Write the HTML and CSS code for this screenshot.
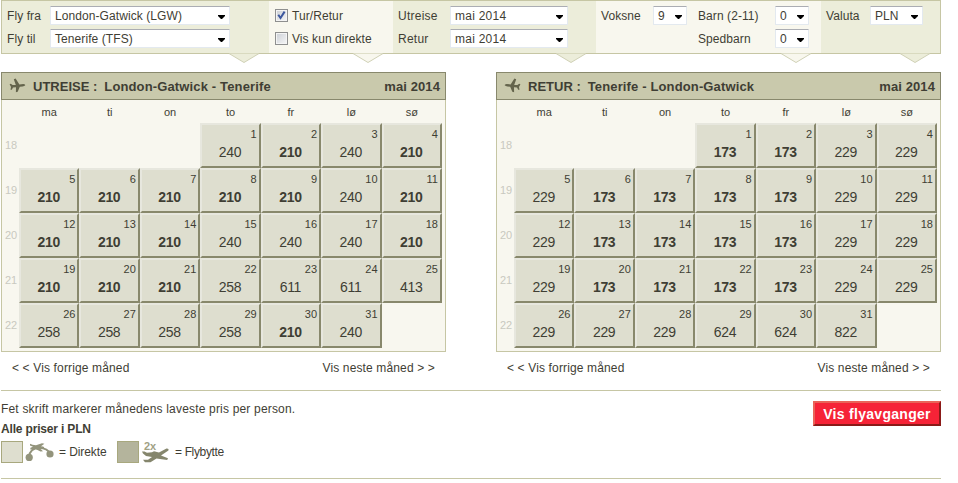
FILE: index.html
```html
<!DOCTYPE html>
<html lang="no">
<head>
<meta charset="utf-8">
<title>Lavpriskalender</title>
<link rel="stylesheet" href="styles.css">
</head>
<body>
<svg class="defs" width="0" height="0">
  <symbol id="plane" viewBox="0 0 17 15">
    <path d="M.6 6.2 1.8 5.8 3.6 6.9H6.8L4.8 1.2 6.6.6 10.4 6.4 14.4 5.9Q16.6 6.3 16.3 7.3 15.4 8.2 13.6 8.4L10.8 8.8 8.7 13.8 6.9 14.2 7 9.3 4 9.5 2.8 11.7 1.5 11.8 2 8.9Z"/>
  </symbol>
  <symbol id="arrow" viewBox="0 0 7 4"><path d="M0 0H7V1L4 4H3L0 1Z"/></symbol>
</svg>
<div class="page">
  <form class="filters">
    <div class="group route">
      <label>Fly fra</label><span class="select"><span>London-Gatwick (LGW)</span><svg><use href="#arrow"/></svg></span>
      <label>Fly til</label><span class="select"><span>Tenerife (TFS)</span><svg><use href="#arrow"/></svg></span>
      <svg class="notch" viewBox="0 0 30 10"><path d="M0 0 15 9 30 0"/></svg>
    </div>
    <div class="group light options">
      <span class="check"><svg viewBox="0 0 11 11"><path d="M2.3 4.8 4.5 8 8.6 1.6"/></svg></span><label>Tur/Retur</label>
      <span class="check"></span><label>Vis kun direkte</label>
      <svg class="notch" viewBox="0 0 30 10"><path d="M0 0 15 9 30 0"/></svg>
    </div>
    <div class="group dates">
      <label>Utreise</label><span class="select"><span>mai 2014</span><svg><use href="#arrow"/></svg></span>
      <label>Retur</label><span class="select"><span>mai 2014</span><svg><use href="#arrow"/></svg></span>
      <svg class="notch" viewBox="0 0 30 10"><path d="M0 0 15 9 30 0"/></svg>
    </div>
    <div class="group light people">
      <label>Voksne</label><span class="select"><span>9</span><svg><use href="#arrow"/></svg></span>
      <label>Barn (2-11)</label><span class="select"><span>0</span><svg><use href="#arrow"/></svg></span>
      <label class="infant">Spedbarn</label><span class="select"><span>0</span><svg><use href="#arrow"/></svg></span>
      <svg class="notch" viewBox="0 0 30 10"><path d="M0 0 15 9 30 0"/></svg>
    </div>
    <div class="group currency">
      <label>Valuta</label><span class="select"><span>PLN</span><svg><use href="#arrow"/></svg></span>
      <svg class="notch" viewBox="0 0 30 10"><path d="M0 0 15 9 30 0"/></svg>
    </div>
  </form>

  <div class="calendars">
    <section class="trip">
      <div class="calendar">
        <header><svg class="plane"><use href="#plane"/></svg><b class="kind">UTREISE :</b><b class="places">London-Gatwick - Tenerife</b><b class="month">mai 2014</b></header>
        <div class="grid names"><span></span><span>ma</span><span>ti</span><span>on</span><span>to</span><span>fr</span><span>lø</span><span>sø</span></div>
        <div class="grid"><span class="week">18</span><span></span><span></span><span></span><a class="day"><i>1</i><span>240</span></a><a class="day low"><i>2</i><span>210</span></a><a class="day"><i>3</i><span>240</span></a><a class="day low"><i>4</i><span>210</span></a></div>
        <div class="grid"><span class="week">19</span><a class="day low"><i>5</i><span>210</span></a><a class="day low"><i>6</i><span>210</span></a><a class="day low"><i>7</i><span>210</span></a><a class="day low"><i>8</i><span>210</span></a><a class="day low"><i>9</i><span>210</span></a><a class="day"><i>10</i><span>240</span></a><a class="day low"><i>11</i><span>210</span></a></div>
        <div class="grid"><span class="week">20</span><a class="day low"><i>12</i><span>210</span></a><a class="day low"><i>13</i><span>210</span></a><a class="day low"><i>14</i><span>210</span></a><a class="day"><i>15</i><span>240</span></a><a class="day"><i>16</i><span>240</span></a><a class="day"><i>17</i><span>240</span></a><a class="day low"><i>18</i><span>210</span></a></div>
        <div class="grid"><span class="week">21</span><a class="day low"><i>19</i><span>210</span></a><a class="day low"><i>20</i><span>210</span></a><a class="day low"><i>21</i><span>210</span></a><a class="day"><i>22</i><span>258</span></a><a class="day"><i>23</i><span>611</span></a><a class="day"><i>24</i><span>611</span></a><a class="day"><i>25</i><span>413</span></a></div>
        <div class="grid"><span class="week">22</span><a class="day"><i>26</i><span>258</span></a><a class="day"><i>27</i><span>258</span></a><a class="day"><i>28</i><span>258</span></a><a class="day"><i>29</i><span>258</span></a><a class="day low"><i>30</i><span>210</span></a><a class="day"><i>31</i><span>240</span></a><span></span></div>
      </div>
      <nav><a>&lt; &lt; Vis forrige måned</a><a>Vis neste måned &gt; &gt;</a></nav>
    </section>
    <section class="trip">
      <div class="calendar">
        <header><svg class="plane back"><use href="#plane"/></svg><b class="kind">RETUR :</b><b class="places">Tenerife - London-Gatwick</b><b class="month">mai 2014</b></header>
        <div class="grid names"><span></span><span>ma</span><span>ti</span><span>on</span><span>to</span><span>fr</span><span>lø</span><span>sø</span></div>
        <div class="grid"><span class="week">18</span><span></span><span></span><span></span><a class="day low"><i>1</i><span>173</span></a><a class="day low"><i>2</i><span>173</span></a><a class="day"><i>3</i><span>229</span></a><a class="day"><i>4</i><span>229</span></a></div>
        <div class="grid"><span class="week">19</span><a class="day"><i>5</i><span>229</span></a><a class="day low"><i>6</i><span>173</span></a><a class="day low"><i>7</i><span>173</span></a><a class="day low"><i>8</i><span>173</span></a><a class="day low"><i>9</i><span>173</span></a><a class="day"><i>10</i><span>229</span></a><a class="day"><i>11</i><span>229</span></a></div>
        <div class="grid"><span class="week">20</span><a class="day"><i>12</i><span>229</span></a><a class="day low"><i>13</i><span>173</span></a><a class="day low"><i>14</i><span>173</span></a><a class="day low"><i>15</i><span>173</span></a><a class="day low"><i>16</i><span>173</span></a><a class="day"><i>17</i><span>229</span></a><a class="day"><i>18</i><span>229</span></a></div>
        <div class="grid"><span class="week">21</span><a class="day"><i>19</i><span>229</span></a><a class="day low"><i>20</i><span>173</span></a><a class="day low"><i>21</i><span>173</span></a><a class="day low"><i>22</i><span>173</span></a><a class="day low"><i>23</i><span>173</span></a><a class="day"><i>24</i><span>229</span></a><a class="day"><i>25</i><span>229</span></a></div>
        <div class="grid"><span class="week">22</span><a class="day"><i>26</i><span>229</span></a><a class="day"><i>27</i><span>229</span></a><a class="day"><i>28</i><span>229</span></a><a class="day"><i>29</i><span>624</span></a><a class="day"><i>30</i><span>624</span></a><a class="day"><i>31</i><span>822</span></a><span></span></div>
      </div>
      <nav><a>&lt; &lt; Vis forrige måned</a><a>Vis neste måned &gt; &gt;</a></nav>
    </section>
  </div>

  <footer>
    <div class="notes">
      <p class="note">Fet skrift markerer månedens laveste pris per person.</p>
      <p class="prices">Alle priser i PLN</p>
      <div class="legend">
        <span class="swatch"></span>
        <svg class="direct" viewBox="0 0 30 20">
          <path class="arc" d="M4 15Q5 6 14 6Q23 6 25 12"/>
          <circle cx="4.2" cy="15.4" r="3.6"/><circle cx="25" cy="12" r="3.6"/>
          <path d="M5 1.8 7.5 2.8 11 3.2 17 1.2 19.4 1.8 16 4.2 18 4.4Q20.4 5.4 18 6.6L15 6.6 18 9.2 15.5 9.4 10 6.8 5.2 7.4 5.5 5.8 8 4.8 5 3.5Z"/>
        </svg>
        <span class="direct-text">= Direkte</span>
        <span class="swatch dark"></span>
        <svg class="change" viewBox="0 0 28 22">
          <text x="2" y="8.5">2x</text>
          <path d="M0 10.5 2.5 10.4 5 11.8 10 11.2 12 10.2 17 11.6 24.5 7.4Q27.2 7.2 26.4 9.6L19 14.4 26 17.2 25.2 19 14.5 17.6 8.5 21.2H3L1 18.8H6L10 16 4 15 1 12.6Z"/>
        </svg>
        <span class="change-text">= Flybytte</span>
      </div>
    </div>
    <button type="button">Vis flyavganger</button>
  </footer>
</div>
</body>
</html>
```
FILE: styles.css
```css
* { box-sizing: border-box; }
body { margin: 0; background: #fff; color: #3f3e34; font: 12px/15px "Liberation Sans", Arial, sans-serif; }
p { margin: 0; }
.defs { position: absolute; }
.page { width: 940px; margin-left: 1px; }

.filters { display: flex; height: 54px; border: 1px solid #c6c6a4; background: #ecedda; letter-spacing: .08px; }
.group { position: relative; display: grid; grid-auto-rows: 19px; row-gap: 4px; align-items: center; align-content: start; padding-top: 5px; white-space: nowrap; background: #ecedda; --fill: #ecedda; }
.group label { padding-top: 2px; }
.light { background: #f8f7ee; --fill: #f8f7ee; }
.route { width: 267px; grid-template-columns: 43px 180px; padding-left: 5px; }
.options { width: 124px; grid-template-columns: 17px auto; padding-left: 6px; }
.dates { width: 203px; grid-template-columns: 52px 118px; padding-left: 5px; letter-spacing: .25px; }
.people { width: 225px; grid-template-columns: 52px 34px 11px 77px 34px; padding-left: 5px; }
.people label:nth-of-type(2), .infant { grid-column: 4; }
.currency { width: 119px; grid-template-columns: 44px 53px; padding-left: 5px; }
.notch { position: absolute; right: 10px; top: 51px; width: 30px; height: 11px; fill: var(--fill); stroke: #d0d1b6; overflow: visible; }
.notch path { transform: translateY(1px); }
.select { height: 19px; display: flex; align-items: center; justify-content: space-between; padding: 0 4px 0 4px; background: #fff; border: 1px solid #e3e9ef; border-top-color: #abadb3; border-radius: 1px; line-height: 17px; }
.select span { padding-top: 2px; }
.select svg { width: 7px; height: 4px; margin-top: 3px; fill: #000; }
.check { width: 13px; height: 13px; border: 1px solid #8e8f8f; background: linear-gradient(135deg, #cbcfd5, #f6f6f6); box-shadow: inset 0 0 0 1px #f4f4f4; }
.check svg { display: block; width: 11px; height: 11px; fill: none; stroke: #3c579e; stroke-width: 2; }

.calendars { display: flex; gap: 50px; margin-top: 18px; }
.trip { width: 445px; }
.calendar { height: 280px; border: 1px solid #c6c6a4; border-top: 0; background: #f8f7ef; }
header { display: flex; align-items: center; height: 28px; margin: 0 -1px; padding: 0 5px 0 7px; border: 1px solid #88886c; background: #c9c9ac; font-size: 13px; white-space: nowrap; }
.plane { width: 17px; height: 15px; margin-right: 7px; margin-top: -2px; fill: #64644c; }
.back { transform: scaleX(-1); }
.kind { margin-right: 7px; }
.places { letter-spacing: .14px; }
.month { margin-left: auto; letter-spacing: .1px; }
.grid { display: grid; grid-template-columns: 17px repeat(7, 60.43px); grid-auto-rows: 45px; }
.names { grid-auto-rows: 23px; line-height: 25px; font-size: 11px; text-align: center; }
.week { align-self: center; padding-left: 1px; text-align: center; color: #c9c9bf; font-size: 11px; }
.day { display: flex; flex-direction: column; border: 2px solid #e7e7de; border-right-color: #88886c; border-bottom-color: #88886c; background: #dedecf; text-align: center; }
.day i { margin: 2px 2px 0; font: 11px/14px "Liberation Sans", Arial, sans-serif; text-align: right; }
.day span { font-size: 14px; line-height: 18px; margin-top: 2px; margin-right: 1px; letter-spacing: -.3px; }
.low span { font-weight: bold; }
nav { display: flex; justify-content: space-between; padding: 9px 11px 0; height: 38px; letter-spacing: .14px; }

footer { display: flex; justify-content: space-between; height: 89px; border: solid #c6c6a4; border-width: 1px 0; padding-top: 11px; }
.note { letter-spacing: .18px; }
.prices { font-weight: bold; margin-top: 5px; letter-spacing: -.17px; }
.legend { display: flex; align-items: center; margin-top: 4px; height: 22px; }
.swatch { width: 22px; height: 22px; border: 1px solid #a8a87e; background: #dedecf; }
.dark { background: #b4b49c; }
.direct { width: 30px; height: 20px; margin: 0 4px 0 2px; fill: #93947c; }
.arc { fill: none; stroke: #93947c; stroke-width: 1.9; }
.direct-text { width: 58px; letter-spacing: -.1px; }
.change { width: 28px; height: 22px; margin: 0 5px 0 3px; fill: #85866d; overflow: visible; }
.change text { font: bold 11px "Liberation Sans", Arial, sans-serif; fill: #a0a184; }
.change-text { letter-spacing: -.35px; }
button { width: 128px; height: 25px; margin: 0; margin-top: -1px; padding: 0; border: 2px solid #e96459; border-right-color: #8b1a18; border-bottom-color: #8b1a18; background: #f62337; color: #fff; font: bold 14px/18px "Liberation Sans", Arial, sans-serif; letter-spacing: .3px; }
```
